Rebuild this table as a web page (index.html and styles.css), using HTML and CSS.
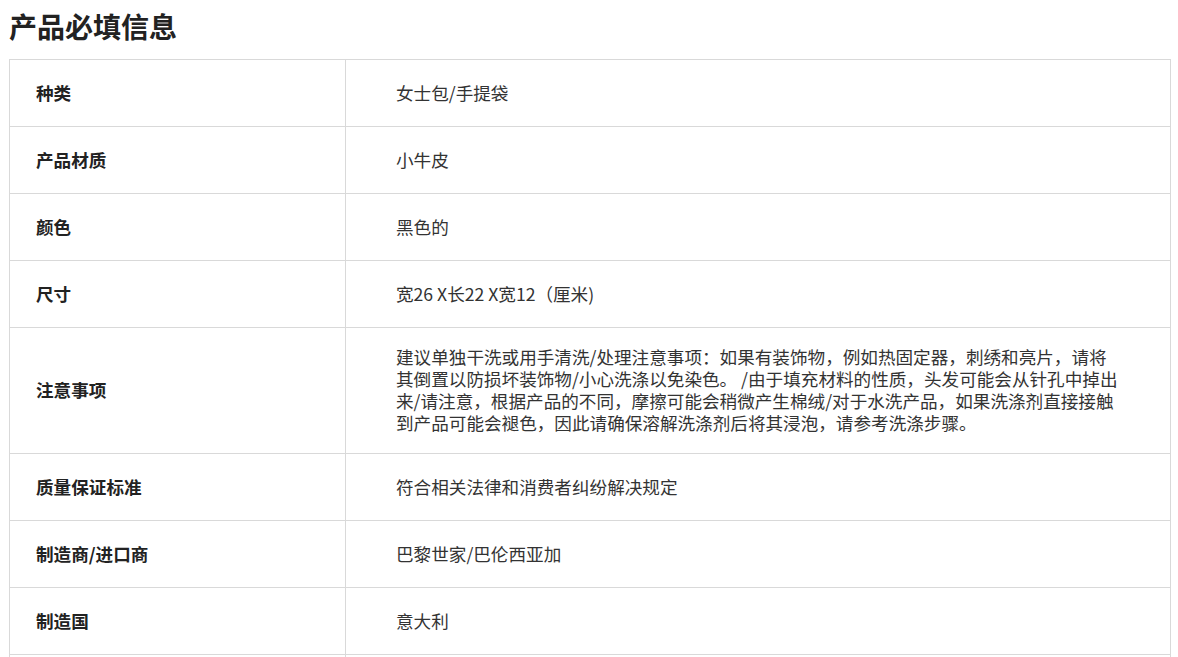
FILE: index.html
```html
<!DOCTYPE html>
<html lang="zh-CN">
<head>
<meta charset="utf-8">
<title>产品必填信息</title>
<link rel="stylesheet" href="styles.css">
</head>
<body>
<div class="page">
  <h1 class="title">产品必填信息</h1>
  <table class="info">
    <colgroup><col class="c-label"><col class="c-value"></colgroup>
    <tbody>
      <tr><th>种类</th><td>女士包/手提袋</td></tr>
      <tr><th>产品材质</th><td>小牛皮</td></tr>
      <tr><th>颜色</th><td>黑色的</td></tr>
      <tr><th>尺寸</th><td>宽26 X长22 X宽12（厘米)</td></tr>
      <tr><th>注意事项</th><td>建议单独干洗或用手清洗/处理注意事项：如果有装饰物，例如热固定器，刺绣和亮片，请将其倒置以防损坏装饰物/小心洗涤以免染色。 /由于填充材料的性质，头发可能会从针孔中掉出来/请注意，根据产品的不同，摩擦可能会稍微产生棉绒/对于水洗产品，如果洗涤剂直接接触到产品可能会褪色，因此请确保溶解洗涤剂后将其浸泡，请参考洗涤步骤。</td></tr>
      <tr><th>质量保证标准</th><td>符合相关法律和消费者纠纷解决规定</td></tr>
      <tr><th>制造商/进口商</th><td>巴黎世家/巴伦西亚加</td></tr>
      <tr><th>制造国</th><td>意大利</td></tr>
      <tr class="more"><th></th><td></td></tr>
    </tbody>
  </table>
</div>
</body>
</html>
```

FILE: styles.css
```css
html, body {
  margin: 0;
  padding: 0;
  background: #ffffff;
}
body {
  font-family: "Noto Sans CJK SC", "Noto Sans", "Liberation Sans", sans-serif;
  color: #333333;
}
.page {
  padding: 0 0 0 9px;
}
.title {
  margin: 0 0 15px 0;
  padding-top: 8px;
  font-size: 28px;
  line-height: 36px;
  font-weight: 700;
  color: #222222;
}
.info {
  border-collapse: collapse;
  table-layout: fixed;
  width: 1162px;
}
.c-label { width: 336px; }
.info th,
.info td {
  border: 1px solid #d9d9d9;
  height: 67px;
  box-sizing: border-box;
  vertical-align: middle;
  font-size: 17.6px;
  line-height: 22px;
  text-align: left;
}
.info th {
  padding: 18px 20px 19px 26px;
  font-weight: 700;
  color: #222222;
}
.info td {
  padding: 18px 50px 19px 50px;
  font-weight: 400;
  color: #333333;
}
```
